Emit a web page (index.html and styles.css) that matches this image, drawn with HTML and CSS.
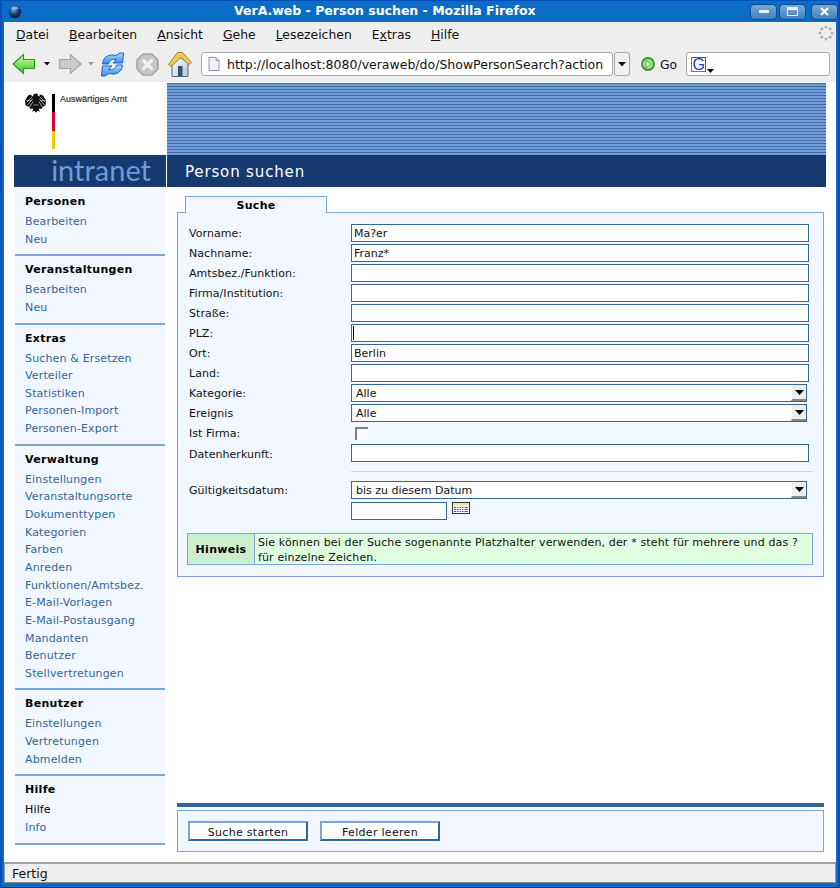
FILE: index.html
```html
<!DOCTYPE html>
<html lang="de">
<head>
<meta charset="utf-8">
<title>VerA.web - Person suchen - Mozilla Firefox</title>
<link rel="stylesheet" href="styles.css">
</head>
<body>
<div class="window">
  <header class="titlebar">
    <svg class="app-icon" width="14" height="14" viewBox="0 0 14 14"><defs><radialGradient id="gl" cx=".4" cy=".3" r=".8"><stop offset="0" stop-color="#7fb4ea"/><stop offset=".5" stop-color="#123a78"/><stop offset="1" stop-color="#04122c"/></radialGradient></defs><circle cx="7" cy="7" r="6.2" fill="url(#gl)"/><path d="M3 3.5a5 5 0 0 1 8 0a7 3 0 0 1-8 0z" fill="#cfe3f7" opacity=".55"/></svg>
    <div class="title-text">VerA.web - Person suchen - Mozilla Firefox</div>
    <div class="wm-buttons">
      <span class="wm-btn"><i class="wm-min"></i></span>
      <span class="wm-btn"><i class="wm-max"></i></span>
      <span class="wm-btn wm-close"><svg width="11" height="9" viewBox="0 0 11 9"><path d="M2 1l7 7M9 1l-7 7" stroke="#fff" stroke-width="2.2" fill="none"/></svg></span>
    </div>
  </header>

  <nav class="menubar">
    <span><u>D</u>atei</span><span><u>B</u>earbeiten</span><span><u>A</u>nsicht</span><span><u>G</u>ehe</span><span><u>L</u>esezeichen</span><span>E<u>x</u>tras</span><span><u>H</u>ilfe</span>
    <svg class="throbber" width="16" height="16" viewBox="0 0 16 16"><g fill="#b4b4b4"><circle cx="8" cy="2" r="1.6"/><circle cx="12.2" cy="3.8" r="1.6"/><circle cx="14" cy="8" r="1.6"/><circle cx="12.2" cy="12.2" r="1.6"/><circle cx="8" cy="14" r="1.6"/><circle cx="3.8" cy="12.2" r="1.6"/><circle cx="2" cy="8" r="1.6"/><circle cx="3.8" cy="3.8" r="1.6"/></g></svg>
  </nav>

  <div class="toolbar">
    <svg class="tb-back" width="24" height="22" viewBox="0 0 24 22"><defs><linearGradient id="gr" x1="0" y1="0" x2="0" y2="1"><stop offset="0" stop-color="#d8fbb8"/><stop offset=".55" stop-color="#7ae25a"/><stop offset="1" stop-color="#36c024"/></linearGradient></defs><path d="M1 11L11.500 1.500V6.500H22.500V15.500H11.500V20.500Z" fill="url(#gr)" stroke="#2a9a1c" stroke-width="1.200"/></svg>
    <svg class="tb-drop" width="6" height="4" viewBox="0 0 6 4"><path d="M0 0h6L3 3.500z" fill="#111"/></svg>
    <svg class="tb-fwd" width="24" height="22" viewBox="0 0 24 22"><path d="M23 11L12.500 1.500V6.500H1.500V15.500H12.500V20.500Z" fill="#cacaca" stroke="#a4a4a4" stroke-width="1.200"/></svg>
    <svg class="tb-drop2" width="6" height="4" viewBox="0 0 6 4"><path d="M0 0h6L3 3.500z" fill="#9a9a9a"/></svg>
    <svg class="tb-reload" width="25" height="25" viewBox="0 0 25 25"><defs><linearGradient id="bl" x1="0" y1="0" x2="0" y2="1"><stop offset="0" stop-color="#a8dcfa"/><stop offset="1" stop-color="#2f8ae6"/></linearGradient></defs><path id="arc1" d="M2.500 12C3 5 9 1.500 16 3.500L20 1H23.500L22.500 11H13L16.500 7.800C12 6.500 9.500 8.500 8.500 12Z" fill="url(#bl)" stroke="#1a62cc" stroke-width="1"/><path d="M22.500 13C22 20 16 23.500 9 21.500L5 24H1.500L2.500 14H12L8.500 17.200C13 18.500 15.500 16.500 16.500 13Z" fill="url(#bl)" stroke="#1a62cc" stroke-width="1"/></svg>
    <svg class="tb-stop" width="23" height="23" viewBox="0 0 23 23"><path d="M7 1H16L22 7V16L16 22H7L1 16V7Z" fill="#c6c6c6" stroke="#a2a2a2" stroke-width="1.500" stroke-linejoin="round"/><path d="M7.500 7.500l8 8M15.500 7.500l-8 8" stroke="#f0f0f0" stroke-width="3.400" stroke-linecap="round"/></svg>
    <svg class="tb-home" width="26" height="27" viewBox="0 0 26 27"><defs><linearGradient id="wl" x1="0" y1="0" x2="1" y2="1"><stop offset="0" stop-color="#ffffff"/><stop offset="1" stop-color="#b4c4dc"/></linearGradient></defs><path d="M5 12V25.500H21V12L13 6Z" fill="url(#wl)" stroke="#5a6a80"/><path d="M1.500 13.500L10.500 1.500H15.500L24.500 11.500L22 13.500L14 6.500L4 15.500Z" fill="#f2ca58" stroke="#8a6a20" stroke-width=".8"/><rect x="11" y="15" width="4.500" height="10.500" fill="#34527e"/></svg>
    <div class="urlbar">
      <svg width="12" height="14" viewBox="0 0 12 14"><path d="M1 .5H8L11 3.500V13.500H1Z" fill="#eef0fb" stroke="#8a94c8"/><path d="M8 .5V3.500H11" fill="none" stroke="#8a94c8"/></svg>
      <span>http://localhost:8080/veraweb/do/ShowPersonSearch?action</span>
    </div>
    <div class="urldrop"><svg width="8" height="5" viewBox="0 0 8 5"><path d="M0 0h8L4 4.500z" fill="#111"/></svg></div>
    <svg class="go-icon" width="14" height="14" viewBox="0 0 14 14"><circle cx="7" cy="7" r="6" fill="#a8e48c" stroke="#2f9a2a" stroke-width="1.800"/><path d="M5 3.500L10.500 7L5 10.500Z" fill="#fff" stroke="#2f9a2a" stroke-width=".8"/></svg>
    <span class="go-text">Go</span>
    <div class="searchbar">
      <span class="g-box"><span class="g-letter">G</span></span>
      <svg class="g-drop" width="7" height="4" viewBox="0 0 7 4"><path d="M0 0h7L3.500 4z" fill="#000"/></svg>
    </div>
  </div>

  <div class="content">
    <aside class="sidebar">
      <div class="logo">
        <svg class="eagle" width="22" height="20" viewBox="0 0 22 20"><path d="M11 .5c1.500 0 2.200 1 1.900 2.200l1 .8 1.100-2 3 1 3 5-.5 5-2.500 1.200-1.500 2.300-2.800-.5 1 3.500-2-1.300-1.700 2-1.700-2-2 1.300 1-3.500-2.800.5-1.500-2.300L.5 12.500 0 7.500l3-5 3-1 1.100 2 1-.8C7.800 1.500 9.500.5 11 .5Z" fill="#111"/><path d="M7 4L2 9M7.500 6L2.500 12M8 8.500L4.500 14.500M15 4L20 9M14.500 6L19.500 12M14 8.500L17.500 14.500" stroke="#fff" stroke-width=".65"/><path d="M1.500 7.500h5M15.500 7.500h5M8.500 12h5" stroke="#fff" stroke-width=".5"/></svg>
        <div class="flag"></div>
        <span class="ministry">Auswärtiges Amt</span>
      </div>
      <div class="brand">intranet</div>
      <nav class="sidenav">
        <section class="navgroup">
          <h3>Personen</h3>
          <a>Bearbeiten</a><a>Neu</a>
        </section>
        <section class="navgroup">
          <h3>Veranstaltungen</h3>
          <a>Bearbeiten</a><a>Neu</a>
        </section>
        <section class="navgroup">
          <h3>Extras</h3>
          <a>Suchen &amp; Ersetzen</a><a>Verteiler</a><a>Statistiken</a><a>Personen-Import</a><a>Personen-Export</a>
        </section>
        <section class="navgroup">
          <h3>Verwaltung</h3>
          <a>Einstellungen</a><a>Veranstaltungsorte</a><a>Dokumenttypen</a><a>Kategorien</a><a>Farben</a><a>Anreden</a><a>Funktionen/Amtsbez.</a><a>E-Mail-Vorlagen</a><a>E-Mail-Postausgang</a><a>Mandanten</a><a>Benutzer</a><a>Stellvertretungen</a>
        </section>
        <section class="navgroup">
          <h3>Benutzer</h3>
          <a>Einstellungen</a><a>Vertretungen</a><a>Abmelden</a>
        </section>
        <section class="navgroup">
          <h3>Hilfe</h3>
          <a class="current">Hilfe</a><a>Info</a>
        </section>
      </nav>
    </aside>

    <main class="main">
      <div class="stripes"></div>
      <h1 class="page-title">Person suchen</h1>
      <div class="main-body">
        <div class="tabs"><div class="tab">Suche</div></div>
        <form class="panel">
          <div class="form-grid">
            <label>Vorname:</label><input class="field" type="text" value="Ma?er">
            <label>Nachname:</label><input class="field" type="text" value="Franz*">
            <label>Amtsbez./Funktion:</label><input class="field" type="text">
            <label>Firma/Institution:</label><input class="field" type="text">
            <label>Straße:</label><input class="field" type="text">
            <label>PLZ:</label><div class="field caret-field"><i class="caret"></i></div>
            <label>Ort:</label><input class="field" type="text" value="Berlin">
            <label>Land:</label><input class="field" type="text">
            <label>Kategorie:</label>
            <div class="select"><span>Alle</span><b class="sel-btn"><svg width="9" height="5" viewBox="0 0 9 5"><path d="M0 0h9L4.500 5z" fill="#000"/></svg></b></div>
            <label>Ereignis</label>
            <div class="select"><span>Alle</span><b class="sel-btn"><svg width="9" height="5" viewBox="0 0 9 5"><path d="M0 0h9L4.500 5z" fill="#000"/></svg></b></div>
            <label>Ist Firma:</label><div class="check-cell"><i class="checkbox"></i></div>
            <label class="tall">Datenherkunft:</label><input class="field" type="text">
          </div>
          <hr class="divider">
          <div class="form-grid date-grid">
            <label>Gültigkeitsdatum:</label>
            <div class="select"><span>bis zu diesem Datum</span><b class="sel-btn"><svg width="9" height="5" viewBox="0 0 9 5"><path d="M0 0h9L4.500 5z" fill="#000"/></svg></b></div>
            <span></span>
            <div class="date-row">
              <input class="field date-field" type="text">
              <svg class="cal" width="18" height="12" viewBox="0 0 18 12"><rect x=".5" y=".5" width="17" height="11" fill="#fff" stroke="#333"/><rect x="1" y="1" width="16" height="2.500" fill="#f2e4a8"/><g fill="#556"><rect x="2" y="5" width="14" height="1"/><rect x="2" y="7" width="14" height="1"/><rect x="2" y="9" width="14" height="1"/></g><g fill="#fff"><rect x="4" y="4.500" width="1" height="6"/><rect x="6.500" y="4.500" width="1" height="6"/><rect x="9" y="4.500" width="1" height="6"/><rect x="11.500" y="4.500" width="1" height="6"/></g><rect x="14.500" y="7" width="1.500" height="1" fill="#d33"/><rect x="14.500" y="9" width="1.500" height="1" fill="#d33"/></svg>
            </div>
          </div>
          <div class="notice">
            <strong>Hinweis</strong>
            <p>Sie können bei der Suche sogenannte Platzhalter verwenden, der * steht für mehrere und das ? für einzelne Zeichen.</p>
          </div>
        </form>
        <div class="spacer"></div>
        <div class="actionbar">
          <button type="button">Suche starten</button>
          <button type="button">Felder leeren</button>
        </div>
      </div>
    </main>
  </div>

  <footer class="statusbar"><span>Fertig</span></footer>
</div>
</body>
</html>
```

FILE: styles.css
```css
* { box-sizing: border-box; }
html, body { margin: 0; padding: 0; }
body { font-family: "DejaVu Sans", sans-serif; font-size: 11px; color: #000; }

.window {
  width: 840px; height: 888px; display: flex; flex-direction: column;
  background: #0a6cc6;
  border-left: 2px solid #0a4cb8; border-right: 2px solid #0a4cb8;
  border-top: 1px solid #0a4cb8; border-bottom: 1px solid #06306e;
}

.titlebar {
  height: 21px; flex: none; display: flex; align-items: center; position: relative;
  padding-left: 6px;
  background: #0a6cc6;
}
.app-icon { flex: none; }
.title-text {
  position: absolute; left: 232px; top: 2px;
  color: #fff; font-weight: bold; font-size: 12.500px; line-height: 16px; white-space: nowrap;
}
.wm-buttons { margin-left: auto; display: flex; gap: 2px; margin-right: 0; }
.wm-btn {
  width: 27px; height: 16px; border-radius: 4px; border: 1px solid #0a4a96;
  background: linear-gradient(#7fa8d0, #3a80c0); display: flex; align-items: center; justify-content: center;
}
.wm-btn + .wm-close { margin-left: 3px; }
.wm-min { width: 10px; height: 3px; background: #e8eef6; display: block; }
.wm-max { width: 11px; height: 9px; border: 1px solid #e8eef6; border-top-width: 3px; display: block; }

.menubar {
  height: 24px; flex: none; margin: 0 2px; background: #eeeeee; display: flex; align-items: center; gap: 20px;
  padding: 0 0 0 12px; font-size: 12.400px; color: #111; position: relative;
}
.throbber { position: absolute; right: 2px; top: 3px; }

.toolbar {
  height: 36px; flex: none; margin: 0 2px; background: #eeeeee; display: flex; align-items: center; padding-left: 8px; position: relative;
}
.tb-back { flex: none; }
.tb-drop { flex: none; margin-left: 8px; }
.tb-fwd { flex: none; margin-left: 8px; }
.tb-drop2 { flex: none; margin-left: 6px; }
.tb-reload { flex: none; margin-left: 6px; }
.tb-stop { flex: none; margin-left: 11px; }
.tb-home { flex: none; margin-left: 8px; }
.urlbar {
  margin-left: 8px; width: 412px; height: 24px; flex: none; background: #fff; border: 1px solid #a8a8a8; border-radius: 3px;
  display: flex; align-items: center; padding-left: 6px; gap: 7px; font-size: 12.500px; color: #111; white-space: nowrap; overflow: hidden;
}
.urlbar svg { flex: none; }
.urldrop {
  margin-left: 1px; width: 16px; height: 24px; flex: none; border: 1px solid #a8a8a8; border-radius: 3px;
  background: #f2f2f2; display: flex; align-items: center; justify-content: center;
}
.go-icon { flex: none; margin-left: 11px; }
.go-text { margin-left: 5px; font-size: 12.400px; color: #111; flex: none; }
.searchbar {
  margin-left: 9px; width: 144px; height: 24px; flex: none; background: #fff; border: 1px solid #a8a8a8; border-radius: 3px;
  display: flex; align-items: center; padding-left: 4px; position: relative;
}
.g-box {
  width: 15px; height: 15px; border: 1px solid #39a040; border-top-color: #3050c0; border-right-color: #d02020; display: flex; align-items: center; justify-content: center;
  background: #fff;
}
.g-letter { font-family: "Liberation Sans", sans-serif; font-size: 16px; line-height: 13px; color: #2040c0; }
.g-drop { position: absolute; left: 20px; top: 16px; }

.content {
  flex: 1; min-height: 0; margin: 0 2px; background: #fff; display: flex; padding-left: 10px; overflow: hidden;
}

.sidebar { width: 152px; flex: none; margin-right: 1px; display: flex; flex-direction: column; }
.logo { height: 73px; flex: none; display: flex; align-items: flex-start; padding: 11px 0 0 11px; }
.eagle { flex: none; }
.flag {
  flex: none; width: 3px; height: 55px; margin: 1px 0 0 5px;
  background: linear-gradient(#000 0 33.300%, #dd0033 33.300% 66.600%, #e8c800 66.600%);
}
.ministry { font-family: "Liberation Sans", sans-serif; font-size: 9px; line-height: 12px; margin: 0 0 0 5px; color: #333; -webkit-text-stroke: .2px #333; white-space: nowrap; }
.brand {
  height: 32px; flex: none; background: #163a70; color: #6f9bd8; font-family: "Lato", sans-serif; font-weight: 400;
  font-size: 29px; line-height: 29px; text-align: right; padding-right: 15px;
}
.sidenav { margin: 1px 1px 0; }
.navgroup {
  background: #f2f7ff; border-bottom: 2px solid #7ba3dc; padding: 6px 0 6px 10px; margin-bottom: 0;
}
.navgroup h3 { margin: 0 0 4px; font-size: 11px; line-height: 15px; font-weight: bold; letter-spacing: .3px; color: #000; }
.navgroup a { display: block; font-size: 11px; line-height: 17.640px; color: #336699; letter-spacing: .15px; }
.navgroup a.current { color: #000; }

.main { width: 659px; flex: none; display: flex; flex-direction: column; }
.stripes { height: 72px; margin-top: 1px; flex: none; background: repeating-linear-gradient(#3f6aa6 0 1px, #729dd8 1px 3px); }
.page-title {
  margin: 0; height: 32px; flex: none; background: #163a70; color: #fff; font-size: 15px; font-weight: normal; line-height: 35px; padding-left: 18px; letter-spacing: .85px;
}
.main-body { flex: 1; min-height: 0; display: flex; flex-direction: column; width: 647px; margin-left: 10px; padding-top: 9px; }
.tabs { height: 16px; flex: none; padding-left: 8px; position: relative; z-index: 1; }
.tab {
  width: 142px; height: 17px; background: #f2f7ff; border: 1px solid #7ba3dc; border-bottom: 0; text-align: center; font-weight: bold; font-size: 11px; line-height: 18px; letter-spacing: .3px;
}
.panel {
  height: 365px; flex: none; background: #f2f7ff; border: 1px solid #7ba3dc; padding: 11px 10px 0 11px;
}
.form-grid { display: grid; grid-template-columns: 162px 1fr; grid-auto-rows: 18px; row-gap: 2px; width: 621px; }
.form-grid label { line-height: 20px; height: 18px; color: #111; letter-spacing: .05px; white-space: nowrap; }
.form-grid label.tall { line-height: 22px; }
.field {
  display: block; height: 18px; width: 458px; border: 1px solid #336699; background: #fff; padding: 0 2px; font: 11px "DejaVu Sans", sans-serif; color: #111; outline: 0; margin: 0;
}
.caret-field { display: flex; align-items: center; padding: 0 1px; }
.caret { width: 1px; height: 14px; background: #000; display: block; }
.select {
  height: 18px; width: 456px; border: 1px solid #336699; background: #fff; display: flex; align-items: center; padding-left: 4px; font-size: 11px; color: #111; position: relative;
}
.sel-btn {
  position: absolute; right: 0; top: 0; bottom: 0; width: 15px; background: #eeeeee; border-left: 1px solid #fff;
  border-bottom: 2px solid #888; display: flex; align-items: center; justify-content: center;
}
.check-cell { padding: 3px 0 0 4px; }
.checkbox {
  display: block; width: 13px; height: 13px; background: #f8fbff; border-top: 2px solid #808080; border-left: 2px solid #808080;
}
.divider { border: 0; border-top: 1px solid #c8d8ec; margin: 9px 0 9px 162px; width: 462px; height: 0; }
.date-grid { grid-auto-rows: auto; row-gap: 3px; }
.date-grid > .select { height: 18px; }
.date-row { display: flex; align-items: flex-start; gap: 5px; }
.date-field { width: 96px; flex: none; }
.cal { flex: none; }
.notice {
  display: flex; width: 626px; height: 32px; margin: 13px 0 0 -2px; background: #dfffdf; border: 1px solid #7ba3dc;
}
.notice strong {
  flex: none; width: 67px; background: #cdeecd; border-right: 1px solid #7ba3dc; text-align: center; line-height: 31px; font-size: 11px; letter-spacing: .3px;
}
.notice p { margin: 0; padding: 1px 0 0 3px; font-size: 11px; line-height: 15px; letter-spacing: .14px; color: #111; }
.spacer { flex: 1; }
.actionbar {
  flex: none; height: 49px; margin-bottom: 10px; border-top: 4px solid #336699; padding-top: 3px; background: #fff; display: flex; position: relative;
}
.actionbar::before {
  content: ""; position: absolute; left: 0; right: 0; top: 3px; bottom: 0; background: #f2f7ff; border: 1px solid #7ba3dc;
}
.actionbar button {
  position: relative; margin: 11px 0 0 11px; width: 120px; height: 20px; background: #fff; font: 11px "DejaVu Sans", sans-serif; color: #111; padding: 2px 0 0;
  border: 2px solid; border-color: #7ba3dc #336699 #336699 #7ba3dc; letter-spacing: .3px;
}
.actionbar button + button { margin-left: 12px; }

.statusbar {
  height: 21px; flex: none; margin: 0 2px 4px; background: #eeeeee; border: 1px solid #a0a0a0; border-top: 2px solid #a0a0a0; border-bottom-color: #888; display: flex; align-items: center; padding-left: 7px; font-size: 12.500px; color: #111;
}
```
